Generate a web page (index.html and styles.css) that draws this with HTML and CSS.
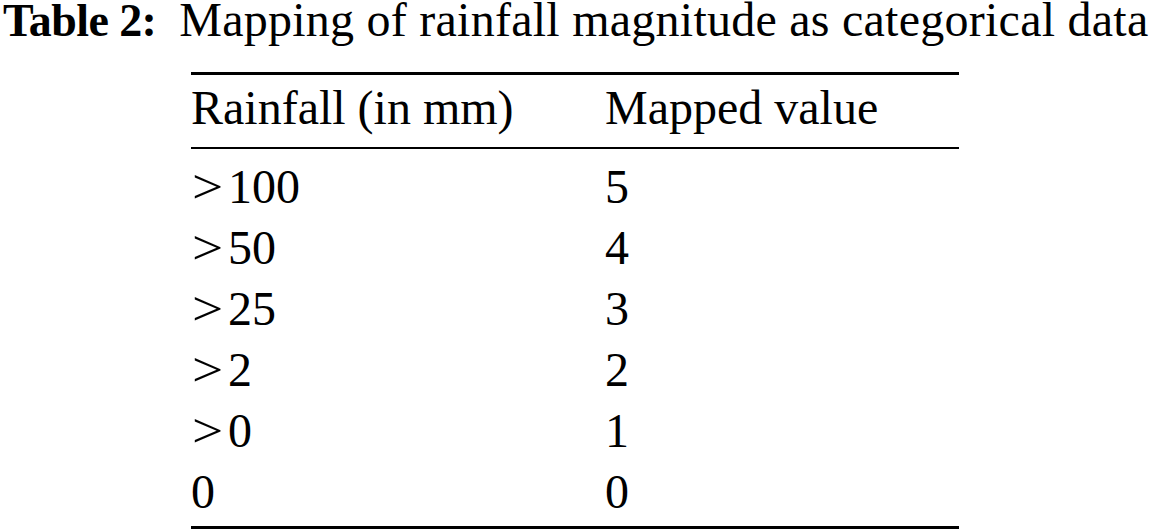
FILE: index.html
```html
<!DOCTYPE html>
<html>
<head>
<meta charset="utf-8">
<link rel="stylesheet" href="styles.css">
</head>
<body>
<div class="caption"><span class="label">Table 2:</span><span class="title">Mapping of rainfall magnitude as categorical data</span></div>
<div class="table">
  <div class="thead">
    <div class="row"><div class="c1">Rainfall (in mm)</div><div class="c2">Mapped value</div></div>
  </div>
  <div class="tbody">
    <div class="row"><div class="c1"><span class="rel">&gt;</span>100</div><div class="c2">5</div></div>
    <div class="row"><div class="c1"><span class="rel">&gt;</span>50</div><div class="c2">4</div></div>
    <div class="row"><div class="c1"><span class="rel">&gt;</span>25</div><div class="c2">3</div></div>
    <div class="row"><div class="c1"><span class="rel">&gt;</span>2</div><div class="c2">2</div></div>
    <div class="row"><div class="c1"><span class="rel">&gt;</span>0</div><div class="c2">1</div></div>
    <div class="row"><div class="c1">0</div><div class="c2">0</div></div>
  </div>
</div>
</body>
</html>
```
FILE: styles.css
```css
html, body {
  margin: 0;
  padding: 0;
  background: #fff;
}
body {
  font-family: "Liberation Serif", "Times New Roman", serif;
  font-size: 48px;
  color: #000;
}
.caption {
  line-height: 40px;
  padding-left: 3px;
  white-space: nowrap;
}
.label {
  font-weight: bold;
  font-size: 46px;
  letter-spacing: -0.6px;
  margin-right: 23px;
}
.title {
  letter-spacing: 0.25px;
}
.table {
  margin: 31px 0 0 191px;
  width: 768px;
  border-top: 3px solid #000;
  border-bottom: 3px solid #000;
}
.thead {
  padding: 2px 0 9px;
  border-bottom: 2px solid #000;
}
.tbody {
  padding: 7px 0 4px;
}
.row {
  display: flex;
  line-height: 61px;
}
.c1 {
  width: 414px;
}
.c2 {
  flex: 1;
}
.rel {
  display: inline-block;
  transform: scaleX(1.15);
  margin-left: 3px;
  margin-right: 7px;
}
```
